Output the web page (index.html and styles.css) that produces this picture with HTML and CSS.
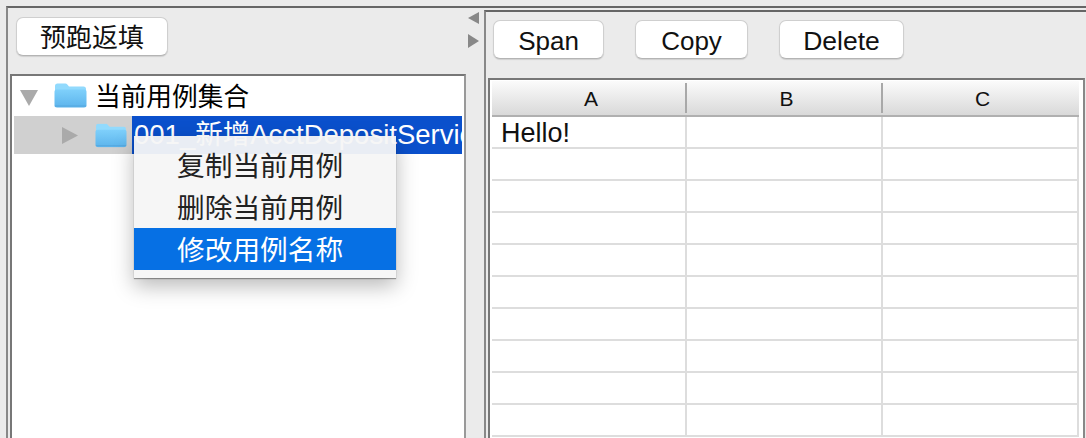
FILE: index.html
```html
<!DOCTYPE html>
<html lang="zh">
<head>
<meta charset="utf-8">
<title>预跑返填</title>
<link rel="stylesheet" href="styles.css">
</head>
<body>
<div class="app">
  <section class="left">
    <button class="btn btn-run">预跑返填</button>
    <div class="tree">
      <div class="row row-root">
        <svg class="tri-down" width="18" height="16" viewBox="0 0 18 16"><path d="M0 0H18L9 16Z"/></svg>
        <svg class="folder folder-root" width="33" height="25" viewBox="0 0 33 25"><use href="#folder"/></svg>
        <span class="root-label">当前用例集合</span>
      </div>
      <div class="row row-child">
        <svg class="tri-right" width="16" height="17" viewBox="0 0 16 17"><path d="M0 0L16 8.500L0 17Z"/></svg>
        <svg class="folder folder-child" width="32" height="25" viewBox="0 0 33 25"><use href="#folder"/></svg>
        <span class="child-label">001_新增AcctDepositService</span>
      </div>
      <ul class="menu">
        <li class="menu-item">复制当前用例</li>
        <li class="menu-item">删除当前用例</li>
        <li class="menu-item active">修改用例名称</li>
      </ul>
    </div>
  </section>
  <div class="divider">
    <svg width="11" height="12" viewBox="0 0 11 12"><path d="M11 0V12L0 6Z"/></svg>
    <svg width="11" height="14" viewBox="0 0 11 14"><path d="M0 0V14L11 7Z"/></svg>
  </div>
  <section class="right">
    <div class="toolbar">
      <button class="btn btn-span">Span</button>
      <button class="btn btn-copy">Copy</button>
      <button class="btn btn-delete">Delete</button>
    </div>
    <div class="sheet">
      <div class="grid">
        <div class="th">A</div><div class="th">B</div><div class="th th-last">C</div>
        <div class="td hello">Hello!</div><div class="td"></div><div class="td"></div>
        <div class="td"></div><div class="td"></div><div class="td"></div>
        <div class="td"></div><div class="td"></div><div class="td"></div>
        <div class="td"></div><div class="td"></div><div class="td"></div>
        <div class="td"></div><div class="td"></div><div class="td"></div>
        <div class="td"></div><div class="td"></div><div class="td"></div>
        <div class="td"></div><div class="td"></div><div class="td"></div>
        <div class="td"></div><div class="td"></div><div class="td"></div>
        <div class="td"></div><div class="td"></div><div class="td"></div>
        <div class="td"></div><div class="td"></div><div class="td"></div>
      </div>
    </div>
  </section>
</div>
<svg class="defs" width="0" height="0">
  <defs>
    <linearGradient id="fold-body" x1="0" y1="0" x2="0" y2="1">
      <stop offset="0" stop-color="#7fd0fb"/>
      <stop offset="1" stop-color="#5cb4ec"/>
    </linearGradient>
    <symbol id="folder" viewBox="0 0 33 25">
      <path d="M1 3a2.500 2.500 0 0 1 2.500-2.500h8a2 2 0 0 1 1.600.800l1.900 2.200h14.500a2.500 2.500 0 0 1 2.500 2.500v3H1Z" fill="#92dafd"/>
      <path d="M0.500 8.500a2 2 0 0 1 2-2h28a2 2 0 0 1 2 2v13.500a2.500 2.500 0 0 1-2.500 2.500H3a2.500 2.500 0 0 1-2.500-2.500Z" fill="url(#fold-body)"/>
      <path d="M0.700 23h31.600" stroke="#4f9fd6" stroke-width="1" opacity=".6"/>
    </symbol>
  </defs>
</svg>
</body>
</html>
```
FILE: styles.css
```css
* { box-sizing: border-box; }
html, body { margin: 0; padding: 0; height: 438px; overflow: hidden; }
body {
  background: #ebebeb;
  color: #111;
  font-family: "Liberation Sans", "Noto Sans CJK SC", sans-serif;
}
.defs { display: block; height: 0; }
.app {
  display: flex;
  width: 1080px;
  height: 432px;
  margin: 6px 0 0 6px;
  border-top: 2px solid #666;
  border-left: 2px solid #888;
}
.left {
  width: 458px;
  flex: none;
  padding: 9px 0 0 2px;
}
.btn {
  display: block;
  height: 39px;
  padding: 3px 0 0;
  background: #fff;
  border: 1px solid #cfcfcf;
  border-bottom-color: #b4b4b4;
  border-radius: 7px;
  box-shadow: 0 1px 1px rgba(0, 0, 0, .12);
  color: #111;
  font: 26px/34px "Liberation Sans", "Noto Sans CJK SC", sans-serif;
  text-align: center;
}
.btn-run { width: 152px; margin-left: 6px; }
.btn-span { width: 111px; }
.btn-copy { width: 113px; }
.btn-delete { width: 125px; font-size: 26.500px; }
.tree {
  position: relative;
  height: 364px;
  margin-top: 18px;
  padding: 0 2px;
  background: #fff;
  border: 2px solid #777;
  border-right-color: #999;
  border-bottom: 0;
}
.row { display: flex; align-items: center; }
.row-root { height: 40px; padding-left: 6px; font-size: 25.700px; color: #000; }
.tri-down { fill: #aaa; margin-top: 3px; }
.tri-right { fill: #aaa; margin-left: 48px; }
.folder { flex: none; }
.folder-root { margin-left: 16px; margin-top: -1px; }
.root-label { margin-left: 8px; padding-top: 2px; line-height: 38px; white-space: nowrap; }
.row-child { height: 38px; background: #d0d0d0; }
.folder-child { margin-left: 17px; }
.child-label {
  flex: 1;
  margin-left: 5px;
  padding-left: 2px;
  height: 38px;
  overflow: hidden;
  background: #0a50cc;
  color: #fff;
  font-size: 27.500px;
  line-height: 38px;
  white-space: nowrap;
}
.menu {
  position: absolute;
  left: 122px;
  top: 60px;
  width: 262px;
  height: 142px;
  margin: 0;
  padding: 8px 0;
  list-style: none;
  background: rgba(245, 245, 245, .95);
  box-shadow: 0 1px 1px rgba(0, 0, 0, .35), 0 8px 20px rgba(0, 0, 0, .28);
}
.menu-item {
  height: 42px;
  padding: 3px 0 0 43px;
  color: #222;
  font-size: 27.700px;
  line-height: 39px;
  white-space: nowrap;
}
.menu-item.active { background: #0670e4; color: #fff; }
.divider {
  width: 18px;
  flex: none;
  display: flex;
  flex-direction: column;
  gap: 10px;
  padding: 4px 0 0 2px;
  fill: #888;
}
.divider svg { display: block; }
.right {
  width: 602px;
  flex: none;
  margin-top: 2px;
  border-top: 2px solid #666;
  border-left: 2px solid #888;
}
.toolbar { display: flex; gap: 31px; padding: 8px 0 0 7px; }
.sheet {
  width: 597px;
  height: 360px;
  margin: 19px 0 0 2px;
  padding: 1px 5px 0 2px;
  overflow: hidden;
  background: #fff;
  border: 2px solid #777;
  border-right-color: #888;
  border-bottom: 0;
}
.grid {
  display: grid;
  grid-template-columns: 195px 196px 196px;
  grid-template-rows: 36px;
  grid-auto-rows: 32px;
}
.th {
  border-bottom: 2px solid #b0b0b0;
  padding: 2px 0 0 3px;
  background:
    linear-gradient(#a8a8a8, #a8a8a8) right 2px / 2px 30px no-repeat,
    linear-gradient(#fbfbfb, #d9d9d9);
  color: #111;
  font-size: 21px;
  line-height: 32px;
  text-align: center;
}
.th-last { background: linear-gradient(#fbfbfb, #d9d9d9); }
.td {
  border-right: 2px solid #ddd;
  border-bottom: 2px solid #ddd;
}
.hello {
  padding: 1px 0 0 9px;
  color: #111;
  font-size: 27px;
  line-height: 30px;
}
```
